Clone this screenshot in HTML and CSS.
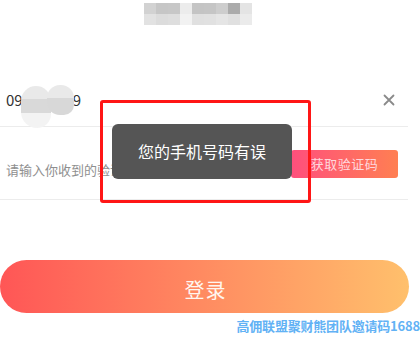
FILE: index.html
```html
<!DOCTYPE html>
<html lang="zh">
<head>
<meta charset="utf-8">
<link rel="stylesheet" href="styles.css">
</head>
<body>
<div class="page">
  <div class="header">
    <div class="mosaic">
      <span style="background:#d2d2d2"></span><span style="background:#c6c6c6"></span><span style="background:#c7c7c7"></span><span style="background:#ececec"></span><span style="background:#c4c4c4"></span><span style="background:#c5c5c5"></span><span style="background:#cdcdcd"></span><span style="background:#ababab"></span><span style="background:#e4e4e4"></span>
      <span style="background:#e2e2e2"></span><span style="background:#dcdcdc"></span><span style="background:#dedede"></span><span style="background:#f2f2f2"></span><span style="background:#e0e0e0"></span><span style="background:#e1e1e1"></span><span style="background:#e5e5e5"></span><span style="background:#e0e0e0"></span><span style="background:#ebebeb"></span>
    </div>
  </div>
  <div class="form">
    <div class="row phone-row">
      <div class="phone">
        <span class="digits">09</span><span class="hidden">5</span><span class="digits">9</span>
        <span class="blob blob-a"></span><span class="blob blob-b"></span>
      </div>
      <svg class="clear" width="12" height="12" viewBox="0 0 12 12"><path d="M1.5 1.5 L10.5 10.5 M10.5 1.5 L1.5 10.5" stroke="#8a8a8a" stroke-width="1.8" stroke-linecap="round"/></svg>
    </div>
    <div class="row code-row">
      <span class="placeholder">请输入你收到的验证码</span>
      <span class="get-code">获取验证码</span>
    </div>
  </div>
  <div class="login">登录</div>
  <div class="watermark">高佣联盟聚财熊团队邀请码1688</div>

  <div class="toast">您的手机号码有误</div>
  <div class="frame"></div>
</div>
</body>
</html>
```
FILE: styles.css
```css
* { box-sizing: border-box; }
html, body { margin: 0; padding: 0; background: #fff; }
body {
  font-family: "Noto Sans CJK SC", "Noto Sans", sans-serif;
  width: 420px;
  height: 337px;
  overflow: hidden;
}
.page { position: relative; width: 420px; height: 337px; }
.header { height: 76px; padding-top: 3px; padding-left: 144px; }
.mosaic {
  display: grid;
  grid-template-columns: repeat(9, 12px);
  grid-template-rows: 11px 11px;
  width: 108px;
}
.mosaic span { display: block; }
.form { width: 408px; }
.row {
  display: flex;
  align-items: center;
  border-bottom: 1px solid #ececec;
}
.phone-row { height: 51px; justify-content: space-between; padding: 0 13px 0 6px; }
.phone { position: relative; font-size: 15px; color: #333; line-height: 20px; padding-bottom: 2px; }
.hidden { display: inline-block; width: 50px; color: #888; text-align: center; }
.blob { position: absolute; }
.blob-a { left: 15px; top: -4px; width: 30px; height: 42px; border-radius: 15px 15px 14px 16px; background: linear-gradient(#e9e9e9 0 30%, #d9d9d9 30% 65%, #f3f3f3 65% 100%); }
.blob-b { left: 41px; top: -5px; width: 27px; height: 30px; border-radius: 13px 13px 10px 13px; background: linear-gradient(#e9e9e9 0 45%, #d8d8d8 45% 100%); }
.clear { display: block; margin-top: -2px; }
.code-row { height: 73px; justify-content: space-between; padding: 0 10px 0 6px; }
.placeholder { font-size: 13px; color: #8f8f8f; margin-top: 12px; }
.get-code {
  width: 107px;
  height: 28px;
  margin-top: 1px;
  border-radius: 3px;
  background: linear-gradient(90deg, #ff4f7d, #ff7f52);
  color: #ffd6dc;
  font-size: 13px;
  display: flex;
  align-items: center;
  justify-content: center;
  letter-spacing: 0.5px;
}
.login {
  margin-top: 60px;
  width: 409px;
  height: 53px;
  border-radius: 27px;
  background: linear-gradient(90deg, #ff5656, #ff8660 45%, #ffc06c);
  color: #fff6ef;
  font-size: 20px;
  letter-spacing: 1px;
  display: flex;
  align-items: center;
  justify-content: center;
  padding-top: 5px;
  padding-left: 2px;
}
.watermark {
  margin-top: 4px;
  text-align: right;
  font-size: 13px;
  font-weight: bold;
  color: #62b2f5;
  line-height: 18px;
  white-space: nowrap;
  letter-spacing: -0.2px;
}
.toast {
  position: absolute;
  left: 112px;
  top: 124px;
  width: 180px;
  height: 55px;
  background: #555;
  border-radius: 6px;
  color: #fff;
  font-size: 16px;
  display: flex;
  align-items: center;
  justify-content: center;
  padding-bottom: 2px;
}
.frame {
  position: absolute;
  left: 100px;
  top: 100px;
  width: 211px;
  height: 103px;
  border: 3px solid #ff1616;
  border-radius: 3px;
}
```
